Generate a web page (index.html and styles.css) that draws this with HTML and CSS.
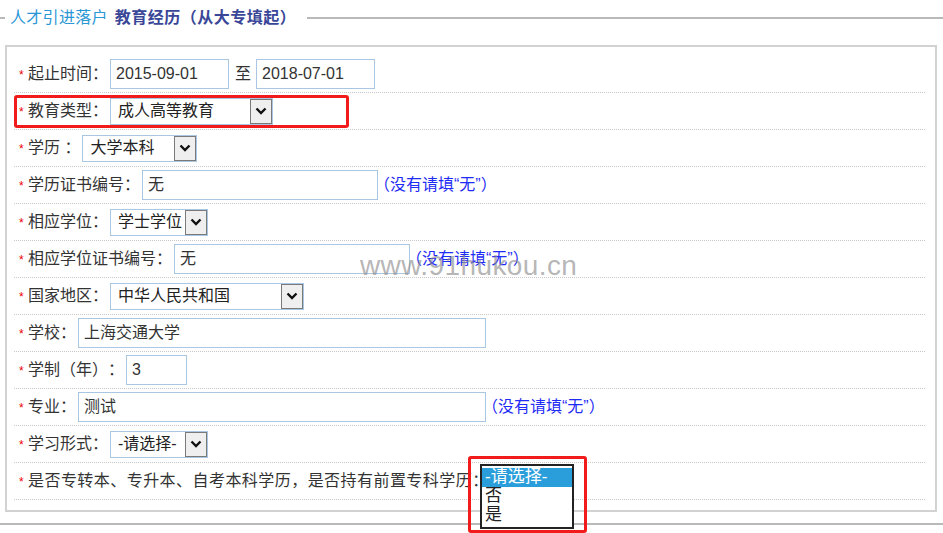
FILE: index.html
```html
<!DOCTYPE html>
<html>
  <head>
    <meta charset="utf-8">
    <title>教育经历</title>
    <link rel="stylesheet" href="styles.css">
  </head>
  <body>
    <div class="page">
      <div class="legend">
        <span class="legend-line short"></span>
        <span class="legend-title"><span class="site">人才引进落户</span><span class="sec">教育经历（从大专填起）</span></span>
        <span class="legend-line long"></span>
      </div>

      <div class="box">
        <div class="row">
          <span class="req">*</span><span class="label">起止时间：</span>
          <span class="inp w120">2015-09-01</span>
          <span class="sep">至</span>
          <span class="inp w120">2018-07-01</span>
        </div>
        <div class="row mark-row">
          <span class="req">*</span><span class="label">教育类型：</span>
          <span class="sel w163"><span class="val">成人高等教育</span><span class="btn"><svg width="12" height="8" viewBox="0 0 12 8"><path d="M1.5 1.5 L6 6 L10.5 1.5" fill="none" stroke="#111" stroke-width="2.4"/></svg></span></span>
          <span class="mark mark-type"></span>
        </div>
        <div class="row">
          <span class="req">*</span><span class="label">学历 ：</span>
          <span class="sel w115"><span class="val">大学本科</span><span class="btn"><svg width="12" height="8" viewBox="0 0 12 8"><path d="M1.5 1.5 L6 6 L10.5 1.5" fill="none" stroke="#111" stroke-width="2.4"/></svg></span></span>
        </div>
        <div class="row">
          <span class="req">*</span><span class="label">学历证书编号：</span>
          <span class="inp w236">无</span>
          <span class="hint">（没有请填“无”）</span>
        </div>
        <div class="row">
          <span class="req">*</span><span class="label">相应学位：</span>
          <span class="sel w98"><span class="val">学士学位</span><span class="btn"><svg width="12" height="8" viewBox="0 0 12 8"><path d="M1.5 1.5 L6 6 L10.5 1.5" fill="none" stroke="#111" stroke-width="2.4"/></svg></span></span>
        </div>
        <div class="row">
          <span class="req">*</span><span class="label">相应学位证书编号：</span>
          <span class="inp w236">无</span>
          <span class="hint">（没有请填“无”）</span>
        </div>
        <div class="row">
          <span class="req">*</span><span class="label">国家地区：</span>
          <span class="sel w194"><span class="val">中华人民共和国</span><span class="btn"><svg width="12" height="8" viewBox="0 0 12 8"><path d="M1.5 1.5 L6 6 L10.5 1.5" fill="none" stroke="#111" stroke-width="2.4"/></svg></span></span>
        </div>
        <div class="row">
          <span class="req">*</span><span class="label">学校：</span>
          <span class="inp w408">上海交通大学</span>
        </div>
        <div class="row">
          <span class="req">*</span><span class="label">学制（年）：</span>
          <span class="inp w61">3</span>
        </div>
        <div class="row">
          <span class="req">*</span><span class="label">专业：</span>
          <span class="inp w408">测试</span>
          <span class="hint">（没有请填“无”）</span>
        </div>
        <div class="row">
          <span class="req">*</span><span class="label">学习形式：</span>
          <span class="sel w98"><span class="val">-请选择-</span><span class="btn"><svg width="12" height="8" viewBox="0 0 12 8"><path d="M1.5 1.5 L6 6 L10.5 1.5" fill="none" stroke="#111" stroke-width="2.4"/></svg></span></span>
        </div>
        <div class="row last-row">
          <span class="req">*</span><span class="label long-label">是否专转本、专升本、自考本科学历，是否持有前置专科学历：</span>
          <div class="listbox">
            <div class="opt on">-请选择-</div>
            <div class="opt">否</div>
            <div class="opt">是</div>
          </div>
          <span class="mark mark-list"></span>
        </div>
      </div>

      <div class="foot-line"></div>
      <div class="watermark">www.91hukou.cn</div>
    </div>
  </body>
</html>
```

FILE: styles.css
```css
body {
  margin: 0;
  background: #fff;
  font-family: "Liberation Sans", "Noto Sans CJK SC", sans-serif;
  font-size: 16px;
  color: #333;
  text-spacing-trim: space-all;
}
.page {
  position: relative;
  width: 943px;
  height: 533px;
  overflow: hidden;
}

/* legend */
.legend {
  display: flex;
  align-items: center;
  height: 36px;
}
.legend-line {
  height: 2px;
  background: #b9b9b9;
}
.legend-line.short { width: 5px; }
.legend-line.long { flex: 1; }
.legend-title {
  padding: 0 11px 0 5px;
  font-size: 16px;
  line-height: 20px;
}
.site { color: #2b97d6; margin-right: 7px; letter-spacing: 0.3px; }
.sec { color: #3a4798; font-weight: bold; letter-spacing: 0.5px; }

/* box */
.box {
  margin: 9px 6px 0 5px;
  border: 2px solid #d2d2d2;
  padding: 9px 10px 10px 7px;
}
.row {
  position: relative;
  display: flex;
  align-items: center;
  height: 36px;
  border-bottom: 1px dotted #c8c8c8;
  padding-left: 5px;
  line-height: 20px;
}
.req {
  color: #e00;
  font-size: 12px;
  width: 9px;
  padding-top: 2px;
}
.label {
  margin-right: 2px;
}
.long-label {
  letter-spacing: 0.45px;
}
.sep { margin: 0 5px 0 6px; }
.hint {
  color: #1f2cf5;
  margin-left: -4px;
}

/* inputs */
.inp {
  box-sizing: border-box;
  height: 30px;
  border: 1px solid #a9c7e3;
  padding: 4px 5px;
  color: #333;
  white-space: nowrap;
}
.w61 { width: 61px; }
.w120 { width: 119px; }
.w236 { width: 236px; }
.w408 { width: 408px; }

/* fake selects */
.sel {
  box-sizing: border-box;
  display: flex;
  align-items: stretch;
  height: 27px;
  border: 1px solid #a9c7e3;
}
.sel .val {
  flex: 1;
  padding: 2px 0 0 7px;
  color: #222;
  white-space: nowrap;
  overflow: hidden;
}
.sel .btn {
  box-sizing: border-box;
  width: 22px;
  display: flex;
  align-items: center;
  justify-content: center;
  background: #efefef;
  border: 1px solid #7a7a7a;
}
.w98 { width: 98px; }
.w115 { width: 115px; }
.w163 { width: 163px; }
.w194 { width: 194px; }

/* open list */
.listbox {
  position: absolute;
  left: 466px;
  top: 1px;
  box-sizing: border-box;
  width: 94px;
  height: 65px;
  border: 2px solid #222;
  background: #fff;
  padding-top: 2px;
  font-size: 17px;
  line-height: 18px;
  z-index: 2;
}
.opt {
  padding-left: 3px;
  height: 19px;
  color: #222;
}
.opt.on {
  background: #2a9edb;
  color: #fff;
}

/* red annotations */
.mark {
  position: absolute;
  box-sizing: border-box;
  border: 3px solid #f21b1b;
  border-radius: 3px;
  z-index: 3;
}
.mark-type {
  left: 0;
  top: 2px;
  width: 335px;
  height: 33px;
}
.mark-list {
  left: 454px;
  top: -7px;
  width: 119px;
  height: 77px;
}

.foot-line {
  height: 2px;
  margin-top: 11px;
  background: #b9b9b9;
}
.watermark {
  position: absolute;
  left: 360px;
  top: 250px;
  font-family: "Liberation Sans", sans-serif;
  font-size: 28px;
  letter-spacing: 0.4px;
  color: rgba(140, 140, 140, 0.65);
}
```
